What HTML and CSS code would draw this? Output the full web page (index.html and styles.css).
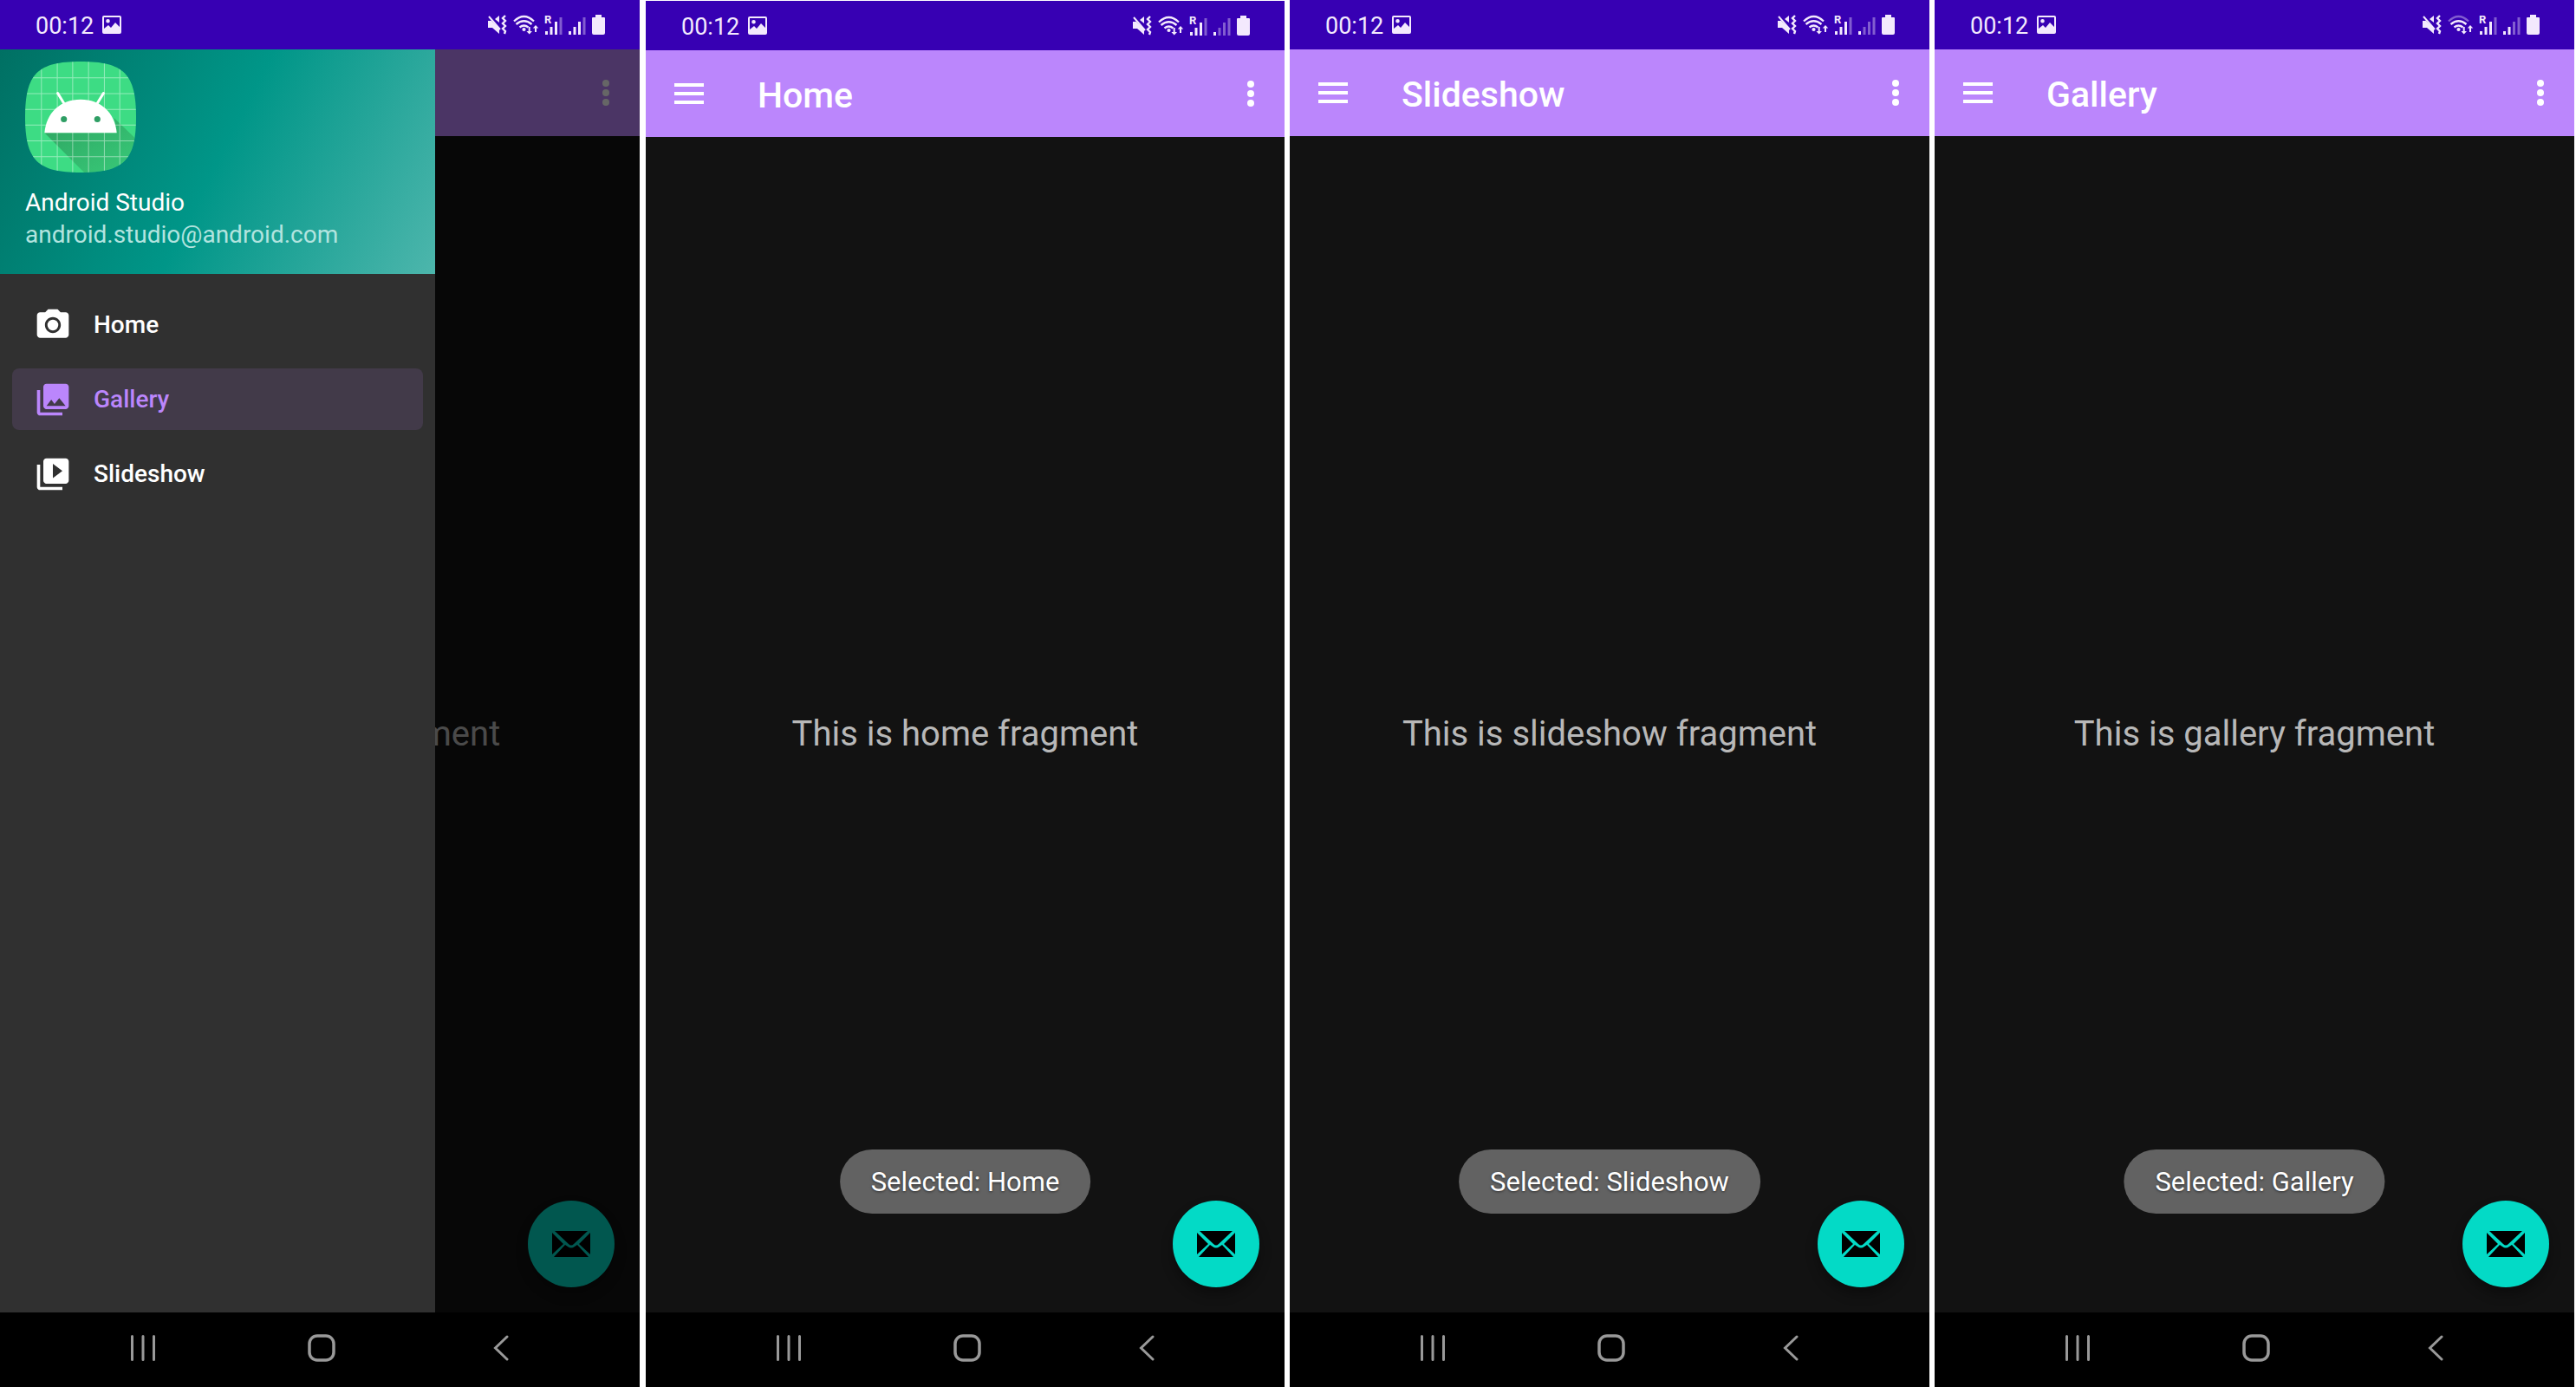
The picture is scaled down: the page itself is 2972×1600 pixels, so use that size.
FILE: index.html
```html
<!DOCTYPE html>
<html lang="en">
<head>
<meta charset="utf-8">
<title>Navigation Drawer</title>
<link rel="stylesheet" href="styles.css">
</head>
<body>
<svg class="sprite" aria-hidden="true">
  <defs>
    <symbol id="picture" viewBox="0 0 22 21"><path fill-rule="evenodd" d="M2 0h18q2 0 2 2v17q0 2-2 2H2q-2 0-2-2V2Q0 0 2 0ZM2 2v13l5-4 3 3 5-6 5 5V2ZM6.500 4a2.200 2.200 0 1 1 0 4.600a2.200 2.200 0 0 1 0-4.600Z"/></symbol>
    <symbol id="sound-off" viewBox="0 0 60 23">
      <path d="M1 7h4l9 9v6L6 15H1ZM9 5l5-4v8Z"/><path d="M2 2l13 15" stroke="currentColor" stroke-width="2"/>
      <path d="M21 1l-3 3 3 3-3 3 3 3-3 3 3 3-1 3" fill="none" stroke="currentColor" stroke-width="2.400"/>
    </symbol>
    <symbol id="wifi-inner" viewBox="0 0 60 23">
      <g fill="none" stroke="currentColor" stroke-width="2.300"><path d="M33.500 11q9-7.500 18 0M37.500 14.500q5-4 10 0"/></g>
      <circle cx="42.500" cy="17" r="2.100"/><path d="M47.700 14h2v5h2.300l-3.300 3.500-3.300-3.500h2.300ZM55 20v-4.500h-2.300L56 12l3.300 3.500H57V20Z"/>
    </symbol>
    <symbol id="wifi-outer" viewBox="0 0 60 23"><path d="M31 7.500q11.500-11 23 0" fill="none" stroke="currentColor" stroke-width="2.300"/></symbol>
    <symbol id="bars-3" viewBox="0 0 20 20"><path d="M0 16h3v4H0ZM5.500 11h3v9h-3ZM11 5h3v15h-3Z"/><path opacity=".4" d="M16.500 0h3v20h-3Z"/></symbol>
    <symbol id="bars-2" viewBox="0 0 20 20"><path d="M0 16h3v4H0ZM5.500 11h3v9h-3Z"/><path opacity=".4" d="M11 5h3v15h-3ZM16.500 0h3v20h-3Z"/></symbol>
    <symbol id="bars-1" viewBox="0 0 20 20"><path d="M0 16h3v4H0Z"/><path opacity=".4" d="M5.500 11h3v9h-3ZM11 5h3v15h-3ZM16.500 0h3v20h-3Z"/></symbol>
    <symbol id="battery" viewBox="0 0 15 23"><path d="M4 0h7v3h3q1 0 1 1v17q0 2-2 2H2q-2 0-2-2V4q0-1 1-1h3Z"/></symbol>
    <symbol id="menu" viewBox="0 0 34 24"><path d="M0 0h34v4H0ZM0 10h34v4H0ZM0 20h34v4H0Z"/></symbol>
    <symbol id="more" viewBox="0 0 8 30"><circle cx="4" cy="4" r="4"/><circle cx="4" cy="15" r="4"/><circle cx="4" cy="26" r="4"/></symbol>
    <symbol id="mail" viewBox="0 0 44 30"><path d="M3 0H41L25 15q-3 3-6 0ZM0 2L13 15 0 27ZM44 2V27L31 15ZM15 16l3 2q4 3 8 0l3-2L42 30H2Z"/></symbol>
    <symbol id="recents" viewBox="0 0 28 30"><path d="M1.500 1.500v27M14 1.500v27M26.500 1.500v27" stroke="currentColor" stroke-width="3" stroke-linecap="round"/></symbol>
    <symbol id="home-key" viewBox="0 0 32 32"><rect x="2" y="2" width="28" height="28" rx="9" fill="none" stroke="currentColor" stroke-width="3.500"/></symbol>
    <symbol id="back" viewBox="0 0 24 30"><path d="M22 2L8.500 15 22 28" fill="none" stroke="currentColor" stroke-width="3" stroke-linecap="round"/></symbol>
    <symbol id="camera" viewBox="0 0 24 24"><circle cx="12" cy="12" r="3.400"/><path d="M9 2L7.170 4H4c-1.100 0-2 .9-2 2v12c0 1.100.9 2 2 2h16c1.100 0 2-.9 2-2V6c0-1.100-.9-2-2-2h-3.170L15 2H9zm3 15c-2.760 0-5-2.240-5-5s2.240-5 5-5 5 2.240 5 5-2.240 5-5 5z" /></symbol>
    <symbol id="gallery" viewBox="0 0 24 24"><path d="M22 16V4c0-1.100-.9-2-2-2H8c-1.100 0-2 .9-2 2v12c0 1.100.9 2 2 2h12c1.100 0 2-.9 2-2zm-11-4l2.030 2.710L16 11l4 5H8l3-4zM2 6v14c0 1.100.9 2 2 2h14v-2H4V6H2z"/></symbol>
    <symbol id="slides" viewBox="0 0 24 24"><path d="M4 6H2v14c0 1.100.9 2 2 2h14v-2H4V6zm16-4H8c-1.100 0-2 .9-2 2v12c0 1.100.9 2 2 2h12c1.100 0 2-.9 2-2V4c0-1.100-.9-2-2-2zm-8 12.500v-9l6 4.500-6 4.500z"/></symbol>
  </defs>
</svg>

<main class="screens">
  <section class="phone" aria-label="Navigation drawer">
    <div class="status"><time>00:12</time><svg class="i-picture"><use href="#picture"/></svg>
      <div class="signals"><svg class="i-start"><use href="#sound-off"/><use href="#wifi-inner"/><use href="#wifi-outer"/></svg><span class="roam"><b>R</b><svg class="i-bars"><use href="#bars-3"/></svg></span><svg class="i-bars"><use href="#bars-3"/></svg><svg class="i-battery"><use href="#battery"/></svg></div></div>
    <div class="app">
      <header class="appbar"><button class="icon-btn" aria-label="Open menu"><svg class="i-menu"><use href="#menu"/></svg></button><h1>Gallery</h1><button class="icon-btn" aria-label="More options"><svg class="i-more"><use href="#more"/></svg></button></header>
      <div class="content"><p>This is gallery fragment</p><button class="fab" aria-label="Send mail"><svg class="i-mail"><use href="#mail"/></svg></button></div>
      <div class="scrim"></div>
      <aside class="drawer">
        <div class="profile">
          <svg class="avatar" viewBox="0 0 126 126">
            <defs><clipPath id="squircle"><path d="M63 0C112 0 126 14 126 63S112 126 63 126 0 112 0 63 14 0 63 0Z"/></clipPath>
            <linearGradient id="shade" x1="0" y1="0" x2="1" y2="1"><stop offset="0" stop-color="#2c9a5b" stop-opacity=".85"/><stop offset="1" stop-color="#2c9a5b" stop-opacity=".25"/></linearGradient></defs>
            <g clip-path="url(#squircle)"><path fill="#3ddc84" d="M0 0h126v126H0Z"/>
            <path fill="url(#shade)" d="M22 81L70 129H129V91L101 64 104 81Z"/>
            <path d="M18.500 0v126M36.500 0v126M54 0v126M72 0v126M90 0v126M107.500 0v126M0 18.500h126M0 36.500h126M0 54.500h126M0 72h126M0 90h126M0 108h126" stroke="#fff" stroke-opacity=".45"/></g>
            <path fill="#fff" d="M22 81C24 58 40 43 63 43s39 15 41 38Z"/><path d="M37 36l8 13M89 36l-8 13" stroke="#fff" stroke-width="3" stroke-linecap="round"/>
            <circle cx="44" cy="65.500" r="3.500" fill="#2e9e64"/><circle cx="82" cy="65.500" r="3.500" fill="#2e9e64"/>
          </svg>
          <strong>Android Studio</strong><span>android.studio@android.com</span>
        </div>
        <nav><a href="#home"><svg><use href="#camera"/></svg>Home</a><a href="#gallery-page" class="active" aria-current="page"><svg><use href="#gallery"/></svg>Gallery</a><a href="#slideshow"><svg><use href="#slides"/></svg>Slideshow</a></nav>
      </aside>
    </div>
    <footer class="keys"><button aria-label="Recents"><svg class="i-recents"><use href="#recents"/></svg></button><button aria-label="Home"><svg class="i-home"><use href="#home-key"/></svg></button><button aria-label="Back"><svg class="i-back"><use href="#back"/></svg></button></footer>
  </section>

  <section class="phone framed" aria-label="Home screen">
    <div class="status"><time>00:12</time><svg class="i-picture"><use href="#picture"/></svg>
      <div class="signals"><svg class="i-start"><use href="#sound-off"/><use href="#wifi-inner"/><use href="#wifi-outer"/></svg><span class="roam"><b>R</b><svg class="i-bars"><use href="#bars-3"/></svg></span><svg class="i-bars"><use href="#bars-1"/></svg><svg class="i-battery"><use href="#battery"/></svg></div></div>
    <div class="app">
      <header class="appbar"><button class="icon-btn" aria-label="Open menu"><svg class="i-menu"><use href="#menu"/></svg></button><h1>Home</h1><button class="icon-btn" aria-label="More options"><svg class="i-more"><use href="#more"/></svg></button></header>
      <div class="content"><p>This is home fragment</p><div class="toast" role="status">Selected: Home</div><button class="fab" aria-label="Send mail"><svg class="i-mail"><use href="#mail"/></svg></button></div>
    </div>
    <footer class="keys"><button aria-label="Recents"><svg class="i-recents"><use href="#recents"/></svg></button><button aria-label="Home"><svg class="i-home"><use href="#home-key"/></svg></button><button aria-label="Back"><svg class="i-back"><use href="#back"/></svg></button></footer>
  </section>

  <section class="phone" aria-label="Slideshow screen">
    <div class="status"><time>00:12</time><svg class="i-picture"><use href="#picture"/></svg>
      <div class="signals"><svg class="i-start"><use href="#sound-off"/><use href="#wifi-inner"/><use href="#wifi-outer"/></svg><span class="roam"><b>R</b><svg class="i-bars"><use href="#bars-3"/></svg></span><svg class="i-bars"><use href="#bars-1"/></svg><svg class="i-battery"><use href="#battery"/></svg></div></div>
    <div class="app">
      <header class="appbar"><button class="icon-btn" aria-label="Open menu"><svg class="i-menu"><use href="#menu"/></svg></button><h1>Slideshow</h1><button class="icon-btn" aria-label="More options"><svg class="i-more"><use href="#more"/></svg></button></header>
      <div class="content"><p>This is slideshow fragment</p><div class="toast" role="status">Selected: Slideshow</div><button class="fab" aria-label="Send mail"><svg class="i-mail"><use href="#mail"/></svg></button></div>
    </div>
    <footer class="keys"><button aria-label="Recents"><svg class="i-recents"><use href="#recents"/></svg></button><button aria-label="Home"><svg class="i-home"><use href="#home-key"/></svg></button><button aria-label="Back"><svg class="i-back"><use href="#back"/></svg></button></footer>
  </section>

  <section class="phone" aria-label="Gallery screen">
    <div class="status"><time>00:12</time><svg class="i-picture"><use href="#picture"/></svg>
      <div class="signals"><svg class="i-start"><use href="#sound-off"/><use href="#wifi-inner"/><use href="#wifi-outer" opacity=".4"/></svg><span class="roam"><b>R</b><svg class="i-bars"><use href="#bars-3"/></svg></span><svg class="i-bars"><use href="#bars-2"/></svg><svg class="i-battery"><use href="#battery"/></svg></div></div>
    <div class="app">
      <header class="appbar"><button class="icon-btn" aria-label="Open menu"><svg class="i-menu"><use href="#menu"/></svg></button><h1>Gallery</h1><button class="icon-btn" aria-label="More options"><svg class="i-more"><use href="#more"/></svg></button></header>
      <div class="content"><p>This is gallery fragment</p><div class="toast" role="status">Selected: Gallery</div><button class="fab" aria-label="Send mail"><svg class="i-mail"><use href="#mail"/></svg></button></div>
    </div>
    <footer class="keys"><button aria-label="Recents"><svg class="i-recents"><use href="#recents"/></svg></button><button aria-label="Home"><svg class="i-home"><use href="#home-key"/></svg></button><button aria-label="Back"><svg class="i-back"><use href="#back"/></svg></button></footer>
  </section>
</main>
</body>
</html>
```
FILE: styles.css
```css
* { box-sizing: border-box; }
body { margin: 0; background: #fff; font-family: Roboto, sans-serif; color: #fff; }
svg { display: block; fill: currentColor; flex: none; }
button { border: 0; padding: 0; background: none; color: inherit; font: inherit; }
.sprite { position: absolute; width: 0; height: 0; }
.screens { display: grid; grid-template-columns: repeat(4, 1fr); gap: 6px; padding-right: 2px; min-height: 100vh; }
.phone { display: flex; flex-direction: column; min-width: 0; overflow: hidden; }
.framed { border: solid #fff; border-width: 1px 0 0 1px; }

.status { display: flex; align-items: center; height: 57px; padding: 0 40px 0 41px; background: #3700b3; color: #f3e9fd; font-size: 27px; line-height: 32px; }
.status time { padding-top: 3px; }
.i-picture { width: 22px; height: 21px; margin-left: 10px; }
.signals { display: flex; align-items: flex-end; gap: 7px; margin-left: auto; }
.i-start { width: 60px; height: 23px; }
.roam { position: relative; }
.roam b { position: absolute; left: -1px; top: -4px; font-size: 13px; line-height: 13px; }
.i-bars { width: 20px; height: 20px; }
.i-battery { width: 15px; height: 23px; }

.app { position: relative; display: flex; flex: 1; flex-direction: column; background: #121212; }
.appbar { display: flex; align-items: center; height: 100px; padding: 0 35px 0 33px; background: #bb86fc; }
.appbar h1 { margin: 0 auto 0 62px; padding-top: 3px; font-size: 41px; line-height: 48px; font-weight: 500; }
.i-menu { width: 34px; height: 24px; }
.i-more { width: 8px; height: 30px; }
.content { position: relative; display: flex; flex: 1; align-items: center; justify-content: center; padding-top: 22px; }
.content p { margin: 0; font-size: 40px; line-height: 48px; color: #b8b8b8; }
.toast { position: absolute; bottom: 114px; left: 50%; transform: translateX(-50%); padding: 21px 36px 19px; border-radius: 37px; background: #626262; font-size: 31px; line-height: 34px; white-space: nowrap; text-shadow: 0 1px 3px #0008; }
.fab { position: absolute; right: 29px; bottom: 29px; display: grid; place-items: center; width: 100px; height: 100px; border-radius: 50%; background: #03dac6; color: #000; box-shadow: 0 8px 14px #0005; }
.i-mail { width: 44px; height: 30px; }

.scrim { position: absolute; inset: 0; background: #0009; }
.drawer { position: absolute; inset: 0 32% 0 0; background: #303030; }
.profile { display: flex; flex-direction: column; height: 259px; padding: 14px 29px; background: linear-gradient(117deg, #007063, #009688 50%, #4db6ac); font-size: 28px; line-height: 37px; }
.avatar { width: 128px; height: 128px; margin-bottom: 16px; }
.profile strong { font-weight: 400; }
.profile span { color: #b2e4df; }
.drawer nav { display: flex; flex-direction: column; gap: 15px; padding: 23px 14px; }
.drawer a { display: flex; align-items: center; gap: 25px; height: 71px; padding: 0 25px; border-radius: 8px; color: #fff; font-size: 28px; line-height: 32px; font-weight: 500; text-decoration: none; }
.drawer a svg { width: 44px; height: 44px; }
.drawer .active { background: #423a49; color: #bb86fc; }

.keys { display: flex; align-items: center; justify-content: center; gap: 176px; height: 86px; padding-bottom: 4px; background: #000; color: #999; }
.i-recents { width: 28px; height: 30px; }
.i-home { width: 32px; height: 32px; }
.i-back { width: 24px; height: 30px; }
```
